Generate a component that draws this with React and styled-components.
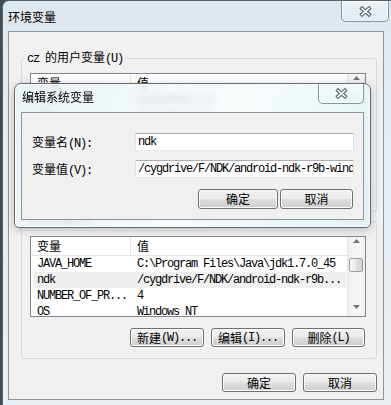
import React from "react";
import styled, { createGlobalStyle } from "styled-components";

const cjk = `"Noto Sans CJK SC", "Liberation Sans", sans-serif`;
const mono = `"Liberation Mono", "Noto Sans CJK SC", monospace`;

const GlobalStyle = createGlobalStyle`
  html, body {
    margin: 0;
    padding: 0;
    background: #3f4b57;
  }
  body {
    font-family: ${cjk};
    font-size: 12px;
    color: #000;
  }
`;

const Screen = styled.div`
  position: relative;
  width: 391px;
  height: 405px;
  overflow: hidden;
  background: #3f4b57;
`;

const Window = styled.div`
  box-sizing: border-box;
  margin-left: 2px;
  width: 395px;
  height: 412px;
  border: 1px solid #59626b;
  border-radius: 7px 7px 0 0;
  background: linear-gradient(180deg, #dde7ee 0%, #e6edf2 35%, #e9eff3 100%);
`;

const TitleBar = styled.div`
  display: flex;
  justify-content: space-between;
  align-items: flex-start;
  height: ${(p) => p.$h}px;
  padding: 0 ${(p) => p.$pr}px 0 ${(p) => p.$pl}px;
`;

const Title = styled.div`
  padding-top: ${(p) => p.$pt}px;
  line-height: 16px;
  font-size: 12px;
  white-space: nowrap;
`;

const CloseButton = styled.div`
  box-sizing: border-box;
  width: ${(p) => p.$w}px;
  height: ${(p) => p.$h}px;
  display: flex;
  align-items: center;
  justify-content: center;
  border: 1px solid #8a929a;
  border-top: none;
  border-radius: 0 0 5px 5px;
  background: linear-gradient(180deg, rgba(255, 255, 255, 0.45), rgba(235, 242, 246, 0.35));
  box-shadow: inset 0 0 0 1px rgba(255, 255, 255, 0.65);
`;

const Client = styled.div`
  box-sizing: border-box;
  margin-left: 5px;
  width: 376px;
  height: 369px;
  padding: 0 6px 0 12px;
  border: 1px solid #8d959c;
  background: #f0f0f0;
`;

const Group = styled.fieldset`
  margin: ${(p) => p.$mt}px 0 0;
  padding: 0;
  min-width: 0;
  border: 1px solid #d5dbe0;
  border-radius: 3px;
`;

const Legend = styled.legend`
  margin-left: 3px;
  padding: 0 2px;
  line-height: 14px;
  font-size: 12px;
  white-space: nowrap;
`;

const GroupBody = styled.div`
  padding: 7px 10px ${(p) => p.$pb}px 8px;
`;

const Mono = styled.span`
  font-family: ${mono};
  font-size: 12px;
  letter-spacing: -1.2px;
`;

const List = styled.div`
  box-sizing: border-box;
  height: ${(p) => p.$h}px;
  display: grid;
  grid-template-columns: 1fr 18px;
  border: 1px solid #828790;
  background: #fff;
  overflow: hidden;
`;

const ListMain = styled.div`
  overflow: hidden;
`;

const Header = styled.div`
  box-sizing: border-box;
  display: grid;
  grid-template-columns: 100px 1fr;
  height: 19px;
  border-bottom: 1px solid #e5e5e5;
`;

const HeaderCell = styled.div`
  box-sizing: border-box;
  padding-left: 6px;
  line-height: 18px;
  border-right: ${(p) => (p.$divider ? "1px solid #e5e5e5" : "none")};
`;

const Row = styled.div`
  display: grid;
  grid-template-columns: 98px 1fr;
  margin: 0 1px 0 2px;
  height: 16px;
  line-height: 16px;
  background: ${(p) => (p.$selected ? "#efefef" : "transparent")};
  font-family: ${mono};
  font-size: 12px;
  letter-spacing: -1.2px;
`;

const Cell = styled.div`
  padding-left: ${(p) => p.$pl}px;
  white-space: nowrap;
  overflow: hidden;
`;

const ScrollBar = styled.div`
  display: flex;
  flex-direction: column;
  align-items: flex-start;
  padding: 2px 0 7px;
  border-left: 1px solid #e6e6e6;
  background: linear-gradient(90deg, #ececec, #f5f5f5 25%, #f6f6f6 75%, #ededed);
`;

const Arrow = styled.svg`
  align-self: center;
  display: block;
`;

const Thumb = styled.div`
  box-sizing: border-box;
  width: 14px;
  height: 14px;
  margin: 15px 0 0 1px;
  border: 1px solid #9c9c9c;
  border-radius: 2px;
  background: linear-gradient(90deg, #f7f7f7, #ececec 45%, #dedede 55%, #d6d6d6);
`;

const Spacer = styled.div`
  flex: 1;
`;

const ButtonRow = styled.div`
  display: flex;
  justify-content: flex-end;
  gap: ${(p) => p.$gap}px;
  margin-top: ${(p) => p.$mt}px;
  padding-right: ${(p) => p.$pr || 0}px;
`;

const Button = styled.div`
  box-sizing: border-box;
  width: ${(p) => p.$w}px;
  height: ${(p) => p.$h || 19}px;
  display: flex;
  align-items: center;
  justify-content: center;
  border: 1px solid #707070;
  border-radius: 3px;
  background: linear-gradient(180deg, #f2f2f2 0%, #ebebeb 48%, #dddddd 52%, #cfcfcf 100%);
  box-shadow: inset 0 0 0 1px #fbfbfb;
  line-height: 16px;
  white-space: nowrap;
`;

const Dialog = styled.div`
  position: absolute;
  left: 14px;
  top: 83px;
  box-sizing: border-box;
  width: 357px;
  height: 145px;
  display: flex;
  flex-direction: column;
  border: 1px solid #5f6a74;
  border-radius: 7px 7px 5px 5px;
  background: linear-gradient(
    120deg,
    rgba(233, 243, 247, 0.86) 0%,
    rgba(246, 251, 252, 0.9) 55%,
    rgba(222, 241, 245, 0.9) 100%
  );
  backdrop-filter: blur(3px);
  box-shadow: 0 2px 9px rgba(0, 0, 0, 0.22), inset 0 0 0 1px rgba(255, 255, 255, 0.75);
`;

const DialogClient = styled.div`
  flex: 1;
  box-sizing: border-box;
  margin: 0 6px 7px 6px;
  padding: 18px 9px 0 10px;
  border: 1px solid #8d959c;
  background: #f0f0f0;
  display: flex;
  flex-direction: column;
  gap: 9px;
`;

const Field = styled.div`
  display: grid;
  grid-template-columns: 103px 1fr;
  align-items: center;
  height: 18px;
`;

const Label = styled.div`
  line-height: 18px;
  padding-top: 2px;
  white-space: nowrap;
`;

const TextBox = styled.div`
  box-sizing: border-box;
  height: 18px;
  padding: 1px 2px 0;
  border: 1px solid;
  border-color: #abadb3 #dbdfe6 #e3e9ef #e2e3ea;
  background: #fff;
  line-height: 15px;
  white-space: nowrap;
  overflow: hidden;
  font-family: ${mono};
  font-size: 12px;
  letter-spacing: -1.2px;
`;

const CloseGlyph = () => (
  <svg width="13" height="11" viewBox="0 0 13 11">
    <path d="M3 2.5 L10 8.5 M10 2.5 L3 8.5" stroke="#59636e" strokeWidth="3.8" strokeLinecap="square" fill="none" />
    <path d="M3 2.5 L10 8.5 M10 2.5 L3 8.5" stroke="#ffffff" strokeWidth="1.6" strokeLinecap="square" fill="none" />
  </svg>
);

const ScrollColumn = () => (
  <ScrollBar>
    <Arrow width="7" height="4" viewBox="0 0 7 4">
      <polygon points="0,4 3.5,0 7,4" fill="#737373" />
    </Arrow>
    <Thumb />
    <Spacer />
    <Arrow width="7" height="4" viewBox="0 0 7 4">
      <polygon points="0,0 3.5,4 7,0" fill="#737373" />
    </Arrow>
  </ScrollBar>
);

const VarList = ({ height, rows }) => (
  <List $h={height}>
    <ListMain>
      <Header>
        <HeaderCell $divider>变量</HeaderCell>
        <HeaderCell>值</HeaderCell>
      </Header>
      {rows.map((r) => (
        <Row key={r.name} $selected={r.selected}>
          <Cell $pl={4}>{r.name}</Cell>
          <Cell $pl={6}>{r.value}</Cell>
        </Row>
      ))}
    </ListMain>
    <ScrollColumn />
  </List>
);

const userVars = [
  { name: "TEMP", value: "%USERPROFILE%" },
  { name: "TMP", value: "%USERPROFILE%" },
];

const systemVars = [
  { name: "JAVA_HOME", value: "C:\\Program Files\\Java\\jdk1.7.0_45" },
  { name: "ndk", value: "/cygdrive/F/NDK/android-ndk-r9b...", selected: true },
  { name: "NUMBER_OF_PR...", value: "4" },
  { name: "OS", value: "Windows_NT" },
];

const VarButtons = ({ mt }) => (
  <ButtonRow $gap={7} $mt={mt} $pr={1}>
    <Button $w={74}>
      新建<Mono>(W)...</Mono>
    </Button>
    <Button $w={74}>
      编辑<Mono>(I)...</Mono>
    </Button>
    <Button $w={73}>
      删除<Mono>(L)</Mono>
    </Button>
  </ButtonRow>
);

export default function App() {
  return (
    <Screen>
      <GlobalStyle />
      <Window>
        <TitleBar $h={30} $pl={5} $pr={7}>
          <Title $pt={8}>环境变量</Title>
          <CloseButton $w={48} $h={21}>
            <CloseGlyph />
          </CloseButton>
        </TitleBar>
        <Client>
          <Group $mt={18}>
            <Legend>
              <Mono>cz </Mono>的用户变量<Mono>(U)</Mono>
            </Legend>
            <GroupBody $pb={12}>
              <VarList height={96} rows={userVars} />
              <VarButtons mt={11} />
            </GroupBody>
          </Group>
          <Group $mt={1}>
            <Legend>
              系统变量<Mono>(S)</Mono>
            </Legend>
            <GroupBody $pb={11}>
              <VarList height={81} rows={systemVars} />
              <VarButtons mt={11} />
            </GroupBody>
          </Group>
          <ButtonRow $gap={7} $mt={14}>
            <Button $w={74}>确定</Button>
            <Button $w={74}>取消</Button>
          </ButtonRow>
        </Client>
      </Window>

      <Dialog>
        <TitleBar $h={28} $pl={7} $pr={6}>
          <Title $pt={5}>编辑系统变量</Title>
          <CloseButton $w={46} $h={20}>
            <CloseGlyph />
          </CloseButton>
        </TitleBar>
        <DialogClient>
          <Field>
            <Label>
              变量名<Mono>(N):</Mono>
            </Label>
            <TextBox>ndk</TextBox>
          </Field>
          <Field>
            <Label>
              变量值<Mono>(V):</Mono>
            </Label>
            <TextBox>/cygdrive/F/NDK/android-ndk-r9b-windows</TextBox>
          </Field>
          <ButtonRow $gap={2} $mt={4} $pr={1}>
            <Button $w={80} $h={20}>确定</Button>
            <Button $w={73} $h={20}>取消</Button>
          </ButtonRow>
        </DialogClient>
      </Dialog>
    </Screen>
  );
}
